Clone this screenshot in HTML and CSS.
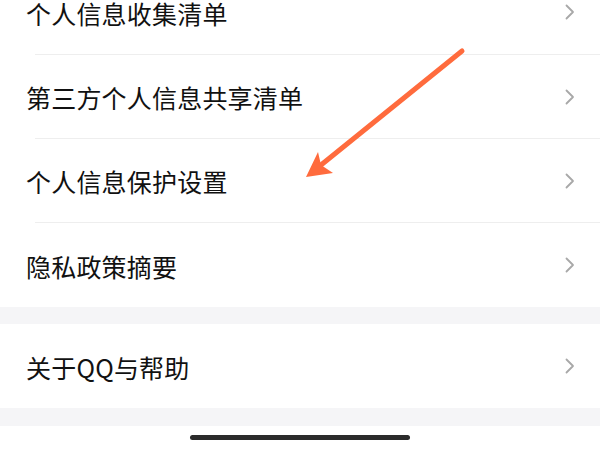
FILE: index.html
```html
<!DOCTYPE html>
<html lang="zh-CN">
<head>
<meta charset="utf-8">
<title>设置</title>
<link rel="stylesheet" href="styles.css">
</head>
<body>
<div class="page">
  <div class="group group-first">
    <div class="row row-tall"><span class="label">个人信息收集清单</span><svg class="chev" viewBox="0 0 10 16"><path d="M1.5 1.5 L8 8 L1.5 14.5"/></svg></div>
    <div class="sep"></div>
    <div class="row"><span class="label">第三方个人信息共享清单</span><svg class="chev" viewBox="0 0 10 16"><path d="M1.5 1.5 L8 8 L1.5 14.5"/></svg></div>
    <div class="sep"></div>
    <div class="row"><span class="label">个人信息保护设置</span><svg class="chev" viewBox="0 0 10 16"><path d="M1.5 1.5 L8 8 L1.5 14.5"/></svg></div>
    <div class="sep"></div>
    <div class="row row-tall"><span class="label">隐私政策摘要</span><svg class="chev" viewBox="0 0 10 16"><path d="M1.5 1.5 L8 8 L1.5 14.5"/></svg></div>
  </div>
  <div class="band"></div>
  <div class="group">
    <div class="row row-tall"><span class="label">关于QQ与帮助</span><svg class="chev" viewBox="0 0 10 16"><path d="M1.5 1.5 L8 8 L1.5 14.5"/></svg></div>
  </div>
  <div class="band band-last"></div>
  <div class="home-area"><div class="home-bar"></div></div>
  <svg class="annot" viewBox="0 0 600 450" width="600" height="450">
    <line x1="462" y1="51" x2="321" y2="165" class="annot-line"/>
    <polygon points="306,177 318,152 321,165 333,173" class="annot-head"/>
  </svg>
</div>
</body>
</html>
```
FILE: styles.css
```css
html, body {
  margin: 0;
  padding: 0;
  background: #ffffff;
  overflow: hidden;
}
.page {
  position: relative;
  width: 600px;
  height: 450px;
  overflow: hidden;
  font-family: "Noto Sans CJK SC", "Noto Sans", sans-serif;
}
.group {
  background: #ffffff;
}
.group-first {
  margin-top: -30px;
}
.row {
  height: 83px;
  display: flex;
  align-items: center;
  justify-content: space-between;
  padding: 0 25px 0 26px;
}
.row-tall {
  height: 84px;
}
.label {
  font-size: 25px;
  color: #111111;
  letter-spacing: 0.2px;
  line-height: 1;
  padding-top: 2px;
}
.chev {
  width: 10px;
  height: 16px;
  fill: none;
  stroke: #a8a8a8;
  stroke-width: 1.8;
  stroke-linecap: round;
  stroke-linejoin: round;
}
.sep {
  height: 1px;
  margin-left: 35px;
  background: #eeeeee;
}
.band {
  height: 17px;
  background: #f5f5f7;
}
.band-last {
  height: 18px;
}
.home-area {
  display: flex;
  justify-content: center;
  padding-top: 9px;
}
.home-bar {
  width: 220px;
  height: 5px;
  border-radius: 3px;
  background: #2b2b2b;
}
.annot {
  position: absolute;
  top: 0;
  left: 0;
}
.annot-line {
  stroke: #ff6b3d;
  stroke-width: 5;
  stroke-linecap: round;
}
.annot-head {
  fill: #ff6b3d;
}
```
